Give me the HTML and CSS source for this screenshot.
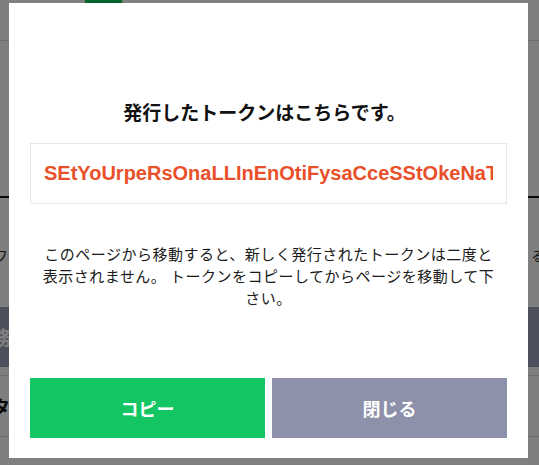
FILE: index.html
```html
<!DOCTYPE html>
<html lang="ja">
<head>
<meta charset="utf-8">
<title>トークン発行</title>
<link rel="stylesheet" href="styles.css">
</head>
<body>
<div class="page">
  <header class="page-header">
    <div class="logo"></div>
  </header>
  <div class="rule-dark"></div>
  <div class="row-text">
    <span class="clip-left">フ</span>
    <span class="clip-right">る</span>
  </div>
  <div class="tab-bar"><span class="clip-left light">務</span></div>
  <div class="table-row"><span class="clip-left bold">タ</span></div>
</div>

<div class="overlay">
  <div class="modal">
    <h2 class="modal-title">発行したトークンはこちらです。</h2>
    <div class="token-box">
      <div class="token-text">SEtYoUrpeRsOnaLLInEnOtiFysaCceSStOkeNaTokenForLineNotify</div>
    </div>
    <p class="modal-note">このページから移動すると、新しく発行されたトークンは二度と<br>表示されません。 トークンをコピーしてからページを移動して下<br>さい。</p>
    <div class="modal-actions">
      <button class="btn btn-copy">コピー</button>
      <button class="btn btn-close">閉じる</button>
    </div>
  </div>
</div>
</body>
</html>
```

FILE: styles.css
```css
html, body {
  margin: 0;
  padding: 0;
}
body {
  width: 539px;
  height: 465px;
  overflow: hidden;
  background: #ffffff;
  font-family: "Noto Sans CJK JP", "Noto Sans", sans-serif;
  color: #111111;
}

/* underlying page (dimmed by overlay) */
.page {
  display: flex;
  flex-direction: column;
}
.page-header {
  height: 41px;
  border-bottom: 1px solid #dcdcdc;
  box-sizing: border-box;
  padding-left: 85px;
}
.logo {
  width: 37px;
  height: 24px;
  background: #06c755;
  border-radius: 0 0 8px 8px;
}
.rule-dark {
  margin-top: 155px;
  height: 2px;
  background: #111111;
}
.row-text {
  margin-top: 49px;
  height: 16px;
  display: flex;
  justify-content: space-between;
  font-size: 14px;
  line-height: 16px;
  color: #222222;
}
.clip-left {
  margin-left: -6px;
}
.clip-right {
  margin-right: -6px;
}
.tab-bar {
  margin-top: 44px;
  height: 60px;
  background: #9b9eb9;
  display: flex;
  align-items: center;
  font-size: 20px;
  font-weight: 700;
}
.light {
  color: #ffffff;
  margin-left: -9px;
}
.table-row {
  margin-top: 8px;
  height: 62px;
  border-top: 1px solid #dddddd;
  border-bottom: 1px solid #dddddd;
  box-sizing: border-box;
  display: flex;
  align-items: center;
  font-size: 18px;
}
.bold {
  font-weight: 700;
  color: #111111;
  margin-left: -8px;
}

/* overlay + modal */
.overlay {
  position: fixed;
  inset: 0;
  background: rgba(0, 0, 0, 0.5);
  padding: 3px 0 0 9px;
}
.modal {
  width: 519px;
  height: 455px;
  box-sizing: border-box;
  overflow: hidden;
  background: #ffffff;
  padding: 95px 21px 20px 21px;
  display: flex;
  flex-direction: column;
}
.modal-title {
  margin: 0;
  font-size: 19px;
  line-height: 28px;
  font-weight: 700;
  text-align: center;
  color: #111111;
  padding-right: 8px;
}
.token-box {
  margin-top: 17px;
  height: 61px;
  box-sizing: border-box;
  border: 1px solid #e6e6e6;
  padding: 0 13px;
  display: flex;
  align-items: center;
  min-width: 0;
}
.token-text {
  flex: 1;
  min-width: 0;
  overflow: hidden;
  white-space: nowrap;
  font-family: "Liberation Sans", Arial, sans-serif;
  font-weight: 700;
  font-size: 20px;
  line-height: 23px;
  color: #e9502a;
}
.modal-note {
  margin: 39px 0 0 0;
  font-size: 15px;
  letter-spacing: 0.5px;
  line-height: 22px;
  text-align: center;
  color: #1a1a1a;
  white-space: nowrap;
}
.modal-actions {
  margin-top: 69px;
  display: flex;
  gap: 7px;
}
.btn {
  flex: 1;
  min-width: 0;
  height: 60px;
  border: 0;
  padding: 0;
  font-family: "Noto Sans CJK JP", "Noto Sans", sans-serif;
  font-size: 18px;
  font-weight: 700;
  color: #ffffff;
  cursor: pointer;
}
.btn-copy {
  background: #14c563;
}
.btn-close {
  background: #8e91aa;
}
```
